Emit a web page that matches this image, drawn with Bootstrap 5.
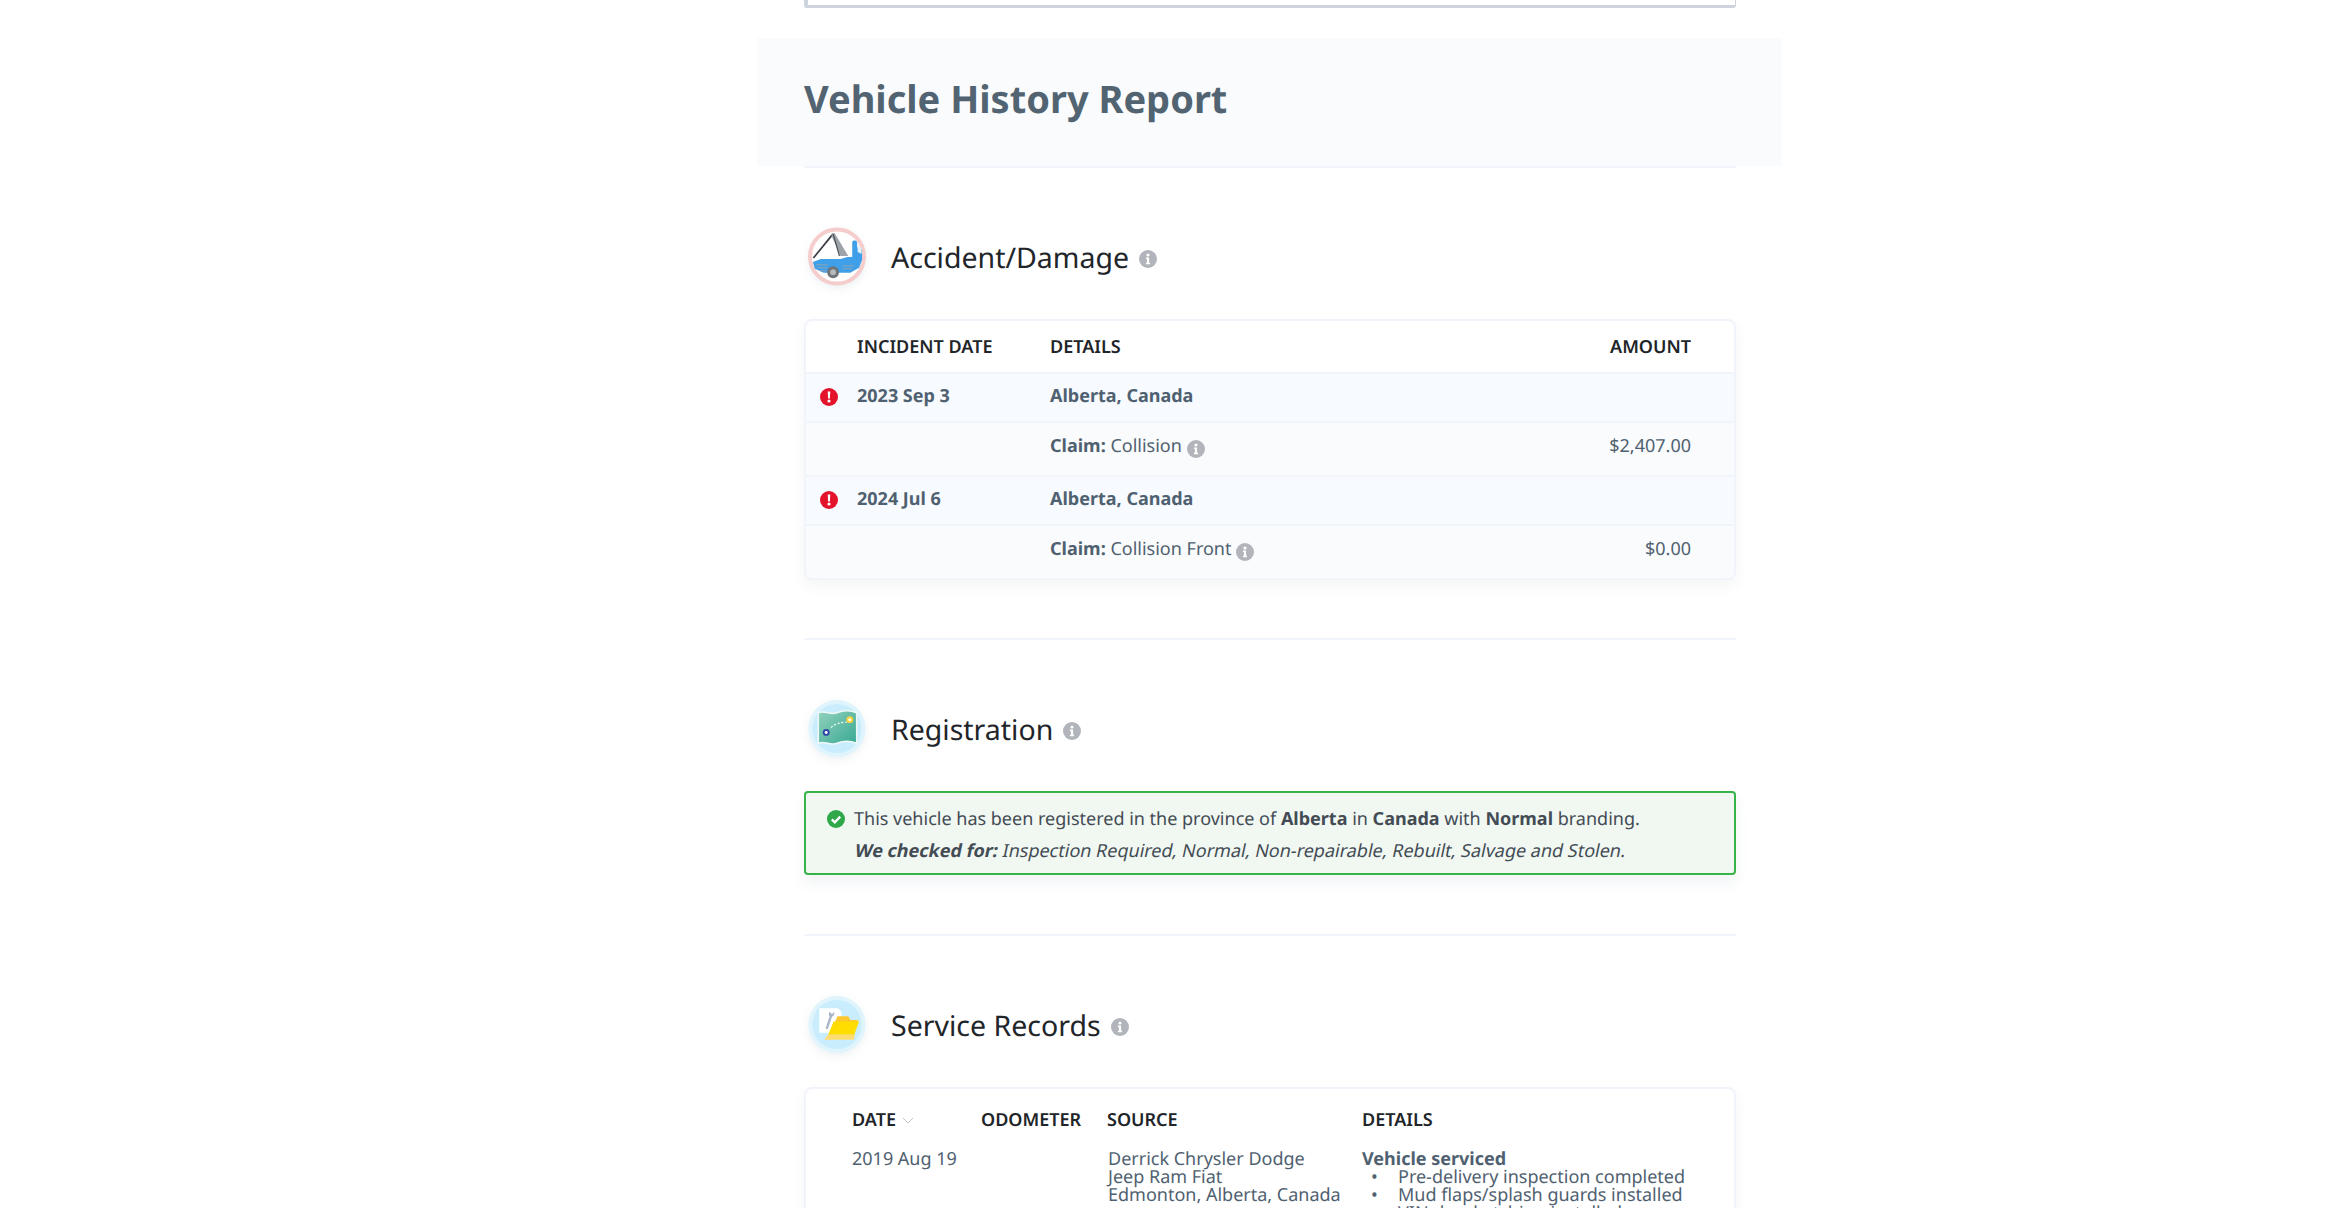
<!DOCTYPE html>
<html>
<head>
    <title>Vehicle History Report</title>
    <link rel="stylesheet" href="https://cdn.jsdelivr.net/npm/bootstrap@5.3.0/dist/css/bootstrap.min.css">
    <style>
        html, body { height: 1208px; overflow: hidden; }
        body { font-family: "Noto Sans", sans-serif; font-size: 18px; color: #4f6170; background: #fff; text-rendering: geometricPrecision; }
        .report-wrap { width: 932px; margin-left: 804px; }
        .top-stub { height: 8px; border: solid #ced4de; border-width: 0 1px 3px 4px; border-radius: 0 0 3px 3px; margin-bottom: 30px; }
        .report-band { background: #fafbfc; margin: 0 -46px 0 -47px; padding: 0 47px 4px; height: 128px; display: flex; align-items: center; }
        .report-band h1 { font-size: 38px; font-weight: 700; color: #526472; margin: 0; }
        .rule { height: 2px; background: #f1f4fb; }
        .sec-head { display: flex; align-items: center; height: 59px; margin: 59px 0 0 4px; }
        .sec-head svg.badge-art { width: 58px; height: 59px; flex: none; overflow: visible; filter: drop-shadow(0 3px 4px rgba(40, 60, 90, .08)); }
        .sec-head h2 { font-size: 28.5px; font-weight: 400; color: #212529; margin: 0 10px 0 25px; padding-top: 3px; line-height: 1; }
        .info-ic { width: 18px; height: 18px; flex: none; }
        .sec-head .info-ic { margin-top: 5px; }
        .data-card { border: 2px solid #f1f4fb; border-radius: 8px; overflow: hidden; box-shadow: 0 6px 14px rgba(60, 80, 110, .06); margin-top: 33px; background: #fff; }
        .data-card .table { margin: 0; font-size: 18px; table-layout: fixed; --bs-table-bg: transparent; color: #4f6170; }
        .data-card th { color: #212529; font-weight: 600; text-transform: uppercase; border: 0; }
        .inc-table td, .inc-table th { padding: 0; border-color: #f1f4fb; border-width: 0 0 2px; color: #4f6170; vertical-align: top; }
        .inc-table th { height: 52px; padding-top: 2px; vertical-align: middle; color: #212529; border-bottom: 2px solid #f1f4fb; }
        .inc-table tr:last-child td { border-bottom: 0; height: 53px; }
        .row-a td { background: #f7fbff; height: 49px; padding-top: 9px !important; font-weight: 700; }
        .row-b td { background: #fafbfc; height: 54px; padding-top: 10px !important; }
        .row-b .info-ic { margin-top: 3px; }
        .inc-table b { font-weight: 700; }
        .flag-ic { width: 18px; height: 18px; margin: 5px 0 0 14px; display: block; }
        .alert-ok { border: 2px solid #38b34a; border-radius: 4px; background: #f1f8f1; color: #434b55; margin-top: 33px; height: 84px; padding: 10px 13px 0 21px; line-height: 32px; box-shadow: 0 8px 14px rgba(60, 80, 110, .07); }
        .alert-ok .ok-ic { width: 18px; height: 18px; margin-right: 9px; flex: none; }
        .alert-ok .second { margin-left: 27px; transform: skewX(-12deg); transform-origin: left 70%; white-space: nowrap; }
        .svc-table td, .svc-table th { padding: 0; border: 0; color: #4f6170; line-height: 18px; vertical-align: top; }
        .svc-table th { color: #212529; height: 61px; padding-top: 22px; line-height: 18px; }
        .svc-table ul { list-style: none; margin: 0; padding: 0; }
        .svc-table li { padding-left: 36px; position: relative; }
        .svc-table li::before { content: "•"; position: absolute; left: 9px; }
        .src-cell { padding-left: 1px !important; }
        .sort-ic { width: 14px; height: 14px; margin: 0 0 2px 5px; }
    </style>
</head>
<body>
<svg width="0" height="0" class="d-block position-absolute">
    <defs>
        <linearGradient id="map-fill" x1="0" y1="0" x2="1" y2="1">
            <stop offset="0" stop-color="#93d2bd"/>
            <stop offset="1" stop-color="#38a892"/>
        </linearGradient>
        <symbol id="i-info" viewBox="0 0 18 18">
            <circle cx="9" cy="9" r="9" fill="#b1b4ba"/>
            <circle cx="9" cy="5" r="1.6" fill="#fff"/>
            <path d="M6.9 7.6h3.2v5.2h1v1.4H6.9v-1.4h1V9H6.9z" fill="#fff"/>
        </symbol>
        <symbol id="i-alert" viewBox="0 0 18 18">
            <circle cx="9" cy="9" r="9" fill="#e3132c"/>
            <path d="M7.7 3.6h2.6l-.4 6.9H8.1z" fill="#fff"/>
            <circle cx="9" cy="13" r="1.6" fill="#fff"/>
        </symbol>
        <symbol id="i-ok" viewBox="0 0 18 18">
            <circle cx="9" cy="9" r="9" fill="#2fa84a"/>
            <path d="M4.8 9.3l3 3 5.4-5.6" fill="none" stroke="#fff" stroke-width="2.4"/>
        </symbol>
    </defs>
</svg>

<div class="report-wrap">
    <div class="top-stub"></div>

    <div class="report-band">
        <h1>Vehicle History Report</h1>
    </div>
    <div class="rule"></div>

    <div class="sec-head">
        <svg class="badge-art" viewBox="0 0 59 59">
            <circle cx="29.500" cy="29.500" r="27.500" fill="#fff" stroke="#f5cdcc" stroke-width="4"/>
            <path d="M5.500 31L25.500 6.500" fill="none" stroke="#3a3f46" stroke-width="1.800"/>
            <path d="M23.500 7.500l3.500-2L41 29h-8z" fill="#9ea3a9"/>
            <path d="M25.500 6.500L32 29" fill="none" stroke="#4a4f56" stroke-width="1.200"/>
            <path d="M5 35l8-3h20l7-2h5V15c0-2.500 4.500-2.500 5 0v5l5 2v11l-3 8-9 5H16l-9-4z" fill="#3f9fe8"/>
            <path d="M50.500 16l4 6v5l-4-2z" fill="#e3f2fc"/>
            <path d="M8 38h12M10 41h10M12 44h7M35 39h12M35 42h10" stroke="#8fa4b5" stroke-width="1"/>
            <circle cx="25.500" cy="45.500" r="6" fill="#6f7478"/>
            <circle cx="25.500" cy="45.500" r="3" fill="#b7babd"/>
        </svg>
        <h2>Accident/Damage</h2>
        <svg class="info-ic"><use href="#i-info"/></svg>
    </div>

    <div class="data-card">
        <table class="table inc-table">
            <colgroup><col style="width:51px"><col style="width:193px"><col><col style="width:200px"><col style="width:43px"></colgroup>
            <thead>
            <tr><th></th><th>Incident Date</th><th>Details</th><th class="text-end">Amount</th><th></th></tr>
            </thead>
            <tbody>
            <tr class="row-a">
                <td><svg class="flag-ic"><use href="#i-alert"/></svg></td>
                <td>2023 Sep 3</td><td>Alberta, Canada</td><td></td><td></td>
            </tr>
            <tr class="row-b">
                <td></td><td></td>
                <td><b>Claim:</b> Collision <svg class="info-ic align-middle"><use href="#i-info"/></svg></td>
                <td class="text-end">$2,407.00</td><td></td>
            </tr>
            <tr class="row-a">
                <td><svg class="flag-ic"><use href="#i-alert"/></svg></td>
                <td>2024 Jul 6</td><td>Alberta, Canada</td><td></td><td></td>
            </tr>
            <tr class="row-b">
                <td></td><td></td>
                <td><b>Claim:</b> Collision Front <svg class="info-ic align-middle"><use href="#i-info"/></svg></td>
                <td class="text-end">$0.00</td><td></td>
            </tr>
            </tbody>
        </table>
    </div>

    <div class="rule" style="margin-top:58px"></div>

    <div class="sec-head">
        <svg class="badge-art" viewBox="0 0 59 59">
            <circle cx="29.500" cy="29.500" r="29" fill="#dff4fd"/>
            <circle cx="29.500" cy="29.500" r="25" fill="#c9edfd"/>
            <path d="M10.500 13.500c7-3 12 3 19 0s13-3 20 0v31c-7-3-13-3-20 0s-12-3-19 0z" fill="url(#map-fill)" stroke="#eef8f6" stroke-width="1.500"/>
            <path d="M23.500 28.500c4-4 9-5 16-5.500" fill="none" stroke="#fff" stroke-width="1.300" stroke-dasharray="2 2"/>
            <circle cx="42.500" cy="20.500" r="3.500" fill="#f6d33d"/>
            <circle cx="42.500" cy="20.500" r="1.500" fill="#fff"/>
            <circle cx="18.500" cy="33.500" r="3.500" fill="#3046a5"/>
            <circle cx="18.500" cy="33.500" r="1.500" fill="#fff"/>
        </svg>
        <h2>Registration</h2>
        <svg class="info-ic"><use href="#i-info"/></svg>
    </div>

    <div class="alert-ok">
        <div class="d-flex align-items-center"><svg class="ok-ic"><use href="#i-ok"/></svg><span>This vehicle has been registered in the province of <b>Alberta</b> in <b>Canada</b> with <b>Normal</b> branding.</span></div>
        <div class="second"><b>We checked for:</b> Inspection Required, Normal, Non-repairable, Rebuilt, Salvage and Stolen.</div>
    </div>

    <div class="rule" style="margin-top:59px"></div>

    <div class="sec-head">
        <svg class="badge-art" viewBox="0 0 59 59">
            <circle cx="29.500" cy="29.500" r="29" fill="#dff4fd"/>
            <circle cx="29.500" cy="29.500" r="25" fill="#c9edfd"/>
            <path d="M11.500 13h19l3.500 3.500V38H11.500z" fill="#fff"/>
            <path d="M19 34l5-15" stroke="#a9b4c6" stroke-width="2.400"/>
            <path d="M22 16.500l2.500 2.500 2-2.500c.8 2.200-.2 4.500-2.300 5l-2.700-1c-.7-1.800-.2-3.200.5-4z" fill="#a9b4c6"/>
            <path d="M27 28l3-7h11l2 4h8l-2 7z" fill="#fdc92f"/>
            <path d="M20.500 40l5.500-13.500h26L47 40z" fill="#ffdd00"/>
            <path d="M16.500 45l4-5H47l.5 1-1 4z" fill="#fedc6f"/>
        </svg>
        <h2>Service Records</h2>
        <svg class="info-ic"><use href="#i-info"/></svg>
    </div>

    <div class="data-card">
        <table class="table svc-table">
            <colgroup><col style="width:46px"><col style="width:129px"><col style="width:126px"><col style="width:255px"><col></colgroup>
            <thead>
            <tr>
                <th></th>
                <th>Date<svg class="sort-ic" viewBox="0 0 14 14"><path d="M2 5l5 5 5-5" fill="none" stroke="#c2c6cb" stroke-width="1"/></svg></th>
                <th>Odometer</th><th>Source</th><th>Details</th>
            </tr>
            </thead>
            <tbody>
            <tr>
                <td></td>
                <td>2019 Aug 19</td>
                <td></td>
                <td class="src-cell">Derrick Chrysler Dodge<br>Jeep Ram Fiat<br>Edmonton, Alberta, Canada</td>
                <td><b>Vehicle serviced</b>
                    <ul>
                        <li>Pre-delivery inspection completed</li>
                        <li>Mud flaps/splash guards installed</li>
                        <li>VIN decal etching installed</li>
                    </ul>
                </td>
            </tr>
            </tbody>
        </table>
    </div>
</div>
</body>
</html>
